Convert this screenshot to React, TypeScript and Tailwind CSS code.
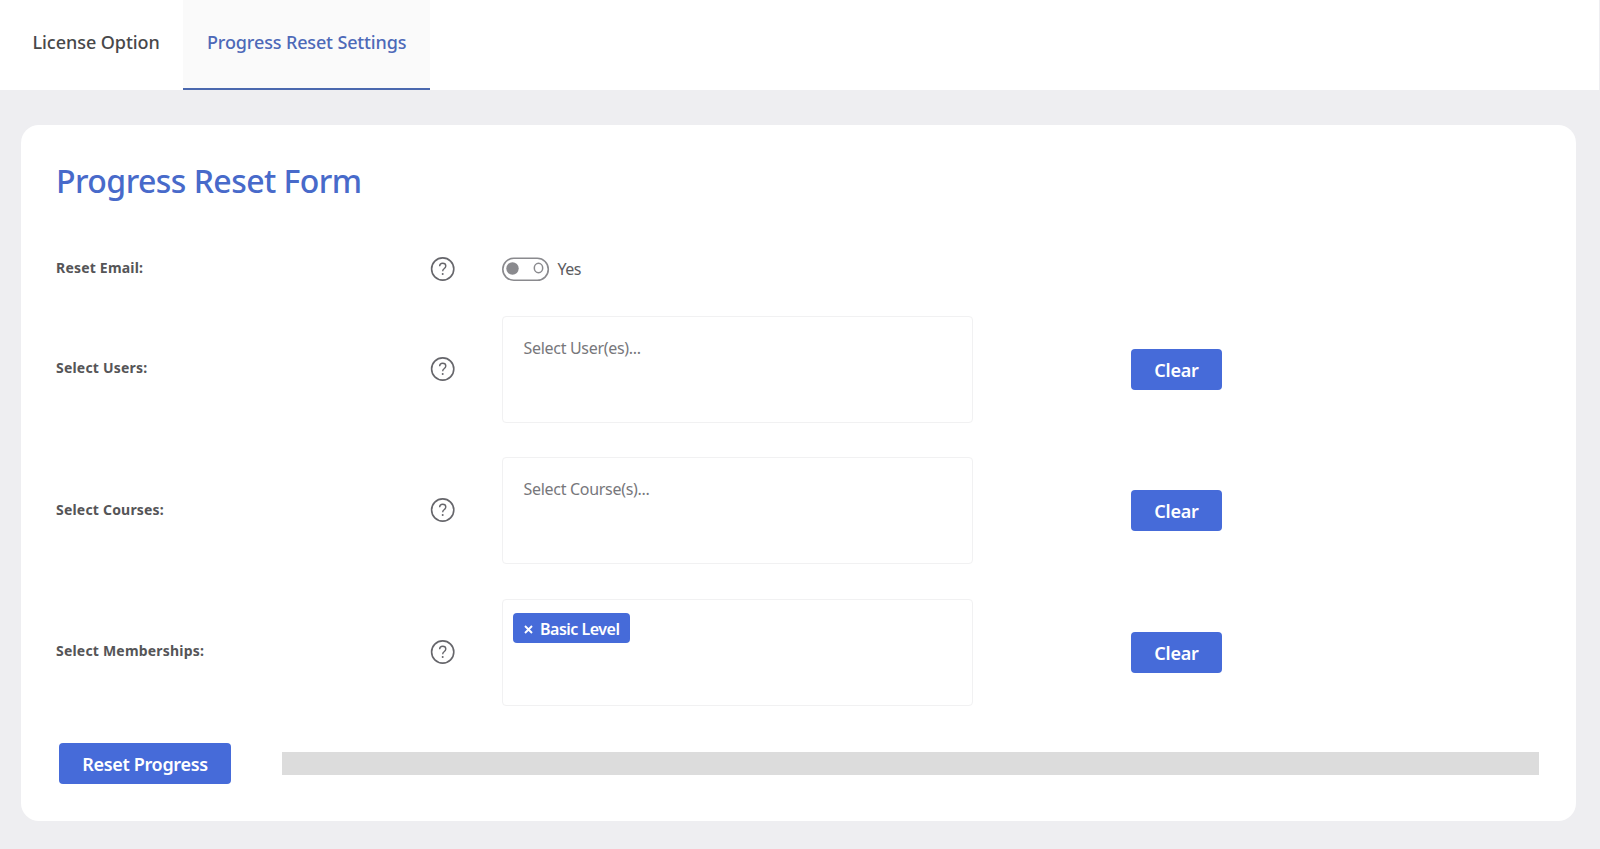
import { ReactNode } from 'react';

type RowProps = {
  label: string;
  children: ReactNode;
};

const HelpIcon = () => (
  <svg width="26" height="26" viewBox="0 0 26 26" fill="none" stroke="#66666b">
    <circle cx="12.7" cy="13" r="11.1" strokeWidth="1.6" />
    <path
      d="M9.6 10.2c.1-1.9 1.3-2.9 3.1-2.9s3.1 1.1 3.1 2.7c0 1.3-.7 2-1.7 2.7-1 .7-1.4 1.2-1.4 2.5"
      strokeWidth="1.4"
    />
    <circle cx="12.7" cy="17.9" r="1" fill="#66666b" stroke="none" />
  </svg>
);

const ClearButton = () => (
  <button className="ml-[158px] h-[41px] w-[91px] rounded-[4px] bg-[#466bd9] pt-[2px] pl-px text-[18px] font-semibold tracking-[-0.2px] text-white">
    Clear
  </button>
);

const Row = ({ label, children }: RowProps) => (
  <div className="flex items-center">
    <p className="w-[373.5px] pb-[2.5px] text-[14px] font-bold tracking-[0.2px] text-[#555557]">
      {label}
    </p>
    <div className="w-[72px] pb-[0.5px]">
      <HelpIcon />
    </div>
    {children}
  </div>
);

const SelectBox = ({ children }: { children: ReactNode }) => (
  <div className="h-[107px] w-[471px] rounded-[4px] border border-[#f1f1f2]">
    {children}
  </div>
);

export default function App() {
  return (
    <main className="h-[849px] w-[1600px] overflow-hidden bg-[#eeeef1] font-['Noto_Sans',sans-serif]">
      <nav className="mr-px flex h-[90px] bg-white text-[18px] font-medium">
        <a className="w-[183px] pt-[29px] pl-[32.5px] text-[#48484a]">
          <span className="tracking-[-0.05px]">License Option</span>
        </a>
        <a className="w-[247px] border-b-2 border-[#4a68ae] bg-[#fafafa] pt-[29px] pl-[24px] text-[#4d69b8]">
          <span className="tracking-[-0.14px]">Progress Reset Settings</span>
        </a>
      </nav>
      <section className="mt-[34.5px] ml-[20.5px] h-[696.5px] w-[1555px] rounded-[18px] bg-white pt-[33px] pl-[35.5px]">
        <h1 className="h-[98px] text-[32px] leading-[45px] font-medium tracking-[-0.54px] text-[#486aca]">
          Progress Reset Form
        </h1>
        <div className="mb-[34px] h-[26px]">
          <Row label="Reset Email:">
            <svg width="48" height="26" viewBox="0 0 48 26" fill="none">
              <rect
                x="0.8"
                y="2.3"
                width="45.5"
                height="22"
                rx="11"
                stroke="#8a8a8e"
                strokeWidth="1.6"
              />
              <circle cx="10.5" cy="12.5" r="6.2" fill="#8a8a8e" />
              <ellipse
                cx="36.5"
                cy="12"
                rx="4.2"
                ry="4.7"
                stroke="#8a8a8e"
                strokeWidth="1.5"
              />
            </svg>
            <span className="ml-[8px] pt-px text-[16px] leading-[22px] tracking-[-0.5px] text-[#5c5c61]">
              Yes
            </span>
          </Row>
        </div>
        <div className="flex flex-col gap-[34.5px]">
          <Row label="Select Users:">
            <SelectBox>
              <p className="pt-[19px] pl-[21px] text-[16px] tracking-[-0.3px] text-[#77777b]">
                Select User(es)...
              </p>
            </SelectBox>
            <ClearButton />
          </Row>
          <Row label="Select Courses:">
            <SelectBox>
              <p className="pt-[19px] pl-[21px] text-[16px] tracking-[-0.3px] text-[#77777b]">
                Select Course(s)...
              </p>
            </SelectBox>
            <ClearButton />
          </Row>
          <Row label="Select Memberships:">
            <SelectBox>
              <div className="mt-[13px] ml-[10.5px] flex h-[30px] w-[117px] items-center rounded-[4px] bg-[#466bd9] pl-[11px] text-white">
                <svg
                  width="9"
                  height="9"
                  viewBox="0 0 9 9"
                  stroke="currentColor"
                  strokeWidth="1.9"
                  className="mt-[4px]"
                >
                  <path d="M1 1l7 7M8 1L1 8" />
                </svg>
                <span className="ml-[7px] pt-[2px] text-[16px] font-semibold tracking-[-0.5px] whitespace-nowrap">
                  Basic Level
                </span>
              </div>
            </SelectBox>
            <ClearButton />
          </Row>
        </div>
        <div className="mt-[37.5px] ml-[3px] flex items-center">
          <button className="h-[41px] w-[172px] rounded-[4px] bg-[#466bd9] pt-[2px] text-[18px] font-semibold tracking-[-0.33px] text-white">
            Reset Progress
          </button>
          <div className="ml-[51px] h-[23px] w-[1257px] bg-[#dcdcdc]" />
        </div>
      </section>
    </main>
  );
}
